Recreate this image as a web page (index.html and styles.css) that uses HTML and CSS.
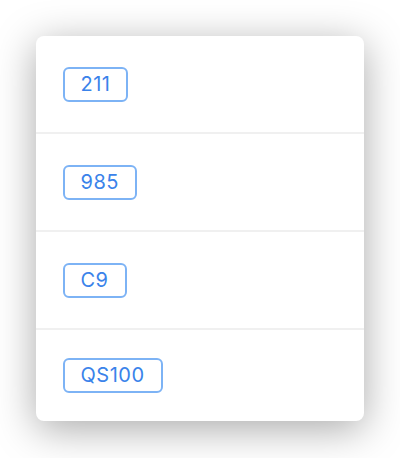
FILE: index.html
```html
<!DOCTYPE html>
<html lang="zh">
<head>
<meta charset="utf-8">
<link rel="stylesheet" href="styles.css">
</head>
<body>
<div class="page">
  <div class="card">
    <div class="row"><span class="tag">211</span></div>
    <div class="row"><span class="tag">985</span></div>
    <div class="row"><span class="tag">C9</span></div>
    <div class="row last"><span class="tag">QS100</span></div>
    <span class="wm wm1">明一锐捷</span>
    <span class="wm wm2">明一锐捷网络</span>
  </div>
</div>
</body>
</html>
```
FILE: styles.css
```css
html, body {
  margin: 0;
  padding: 0;
  background: #ffffff;
}
.page {
  padding: 36px 36px 37px 36px;
  font-family: Inter, "Noto Sans", "Noto Sans CJK SC", sans-serif;
}
.card {
  position: relative;
  width: 328px;
  background: #ffffff;
  border-radius: 8px;
  box-shadow: 0 8px 40px rgba(0, 0, 0, 0.34);
  overflow: hidden;
}
.row {
  display: flex;
  align-items: center;
  height: 96px;
  padding-left: 26.5px;
  border-bottom: 2px solid #f0f0f0;
  box-sizing: content-box;
}
.row.last {
  height: 91px;
  border-bottom: none;
}
.tag {
  display: inline-block;
  height: 31px;
  line-height: 31px;
  padding: 0 16px;
  border: 2px solid #7db3f5;
  border-radius: 6px;
  color: #3a83ea;
  font-size: 20px;
  font-weight: 400;
  letter-spacing: 0.5px;
}
.wm {
  position: absolute;
  font-size: 22px;
  color: rgba(0, 0, 0, 0.025);
  transform: rotate(-18deg);
  transform-origin: left bottom;
  white-space: nowrap;
  pointer-events: none;
}
.wm1 {
  left: 178px;
  top: 26px;
}
.wm2 {
  left: 178px;
  top: 262px;
}
```
